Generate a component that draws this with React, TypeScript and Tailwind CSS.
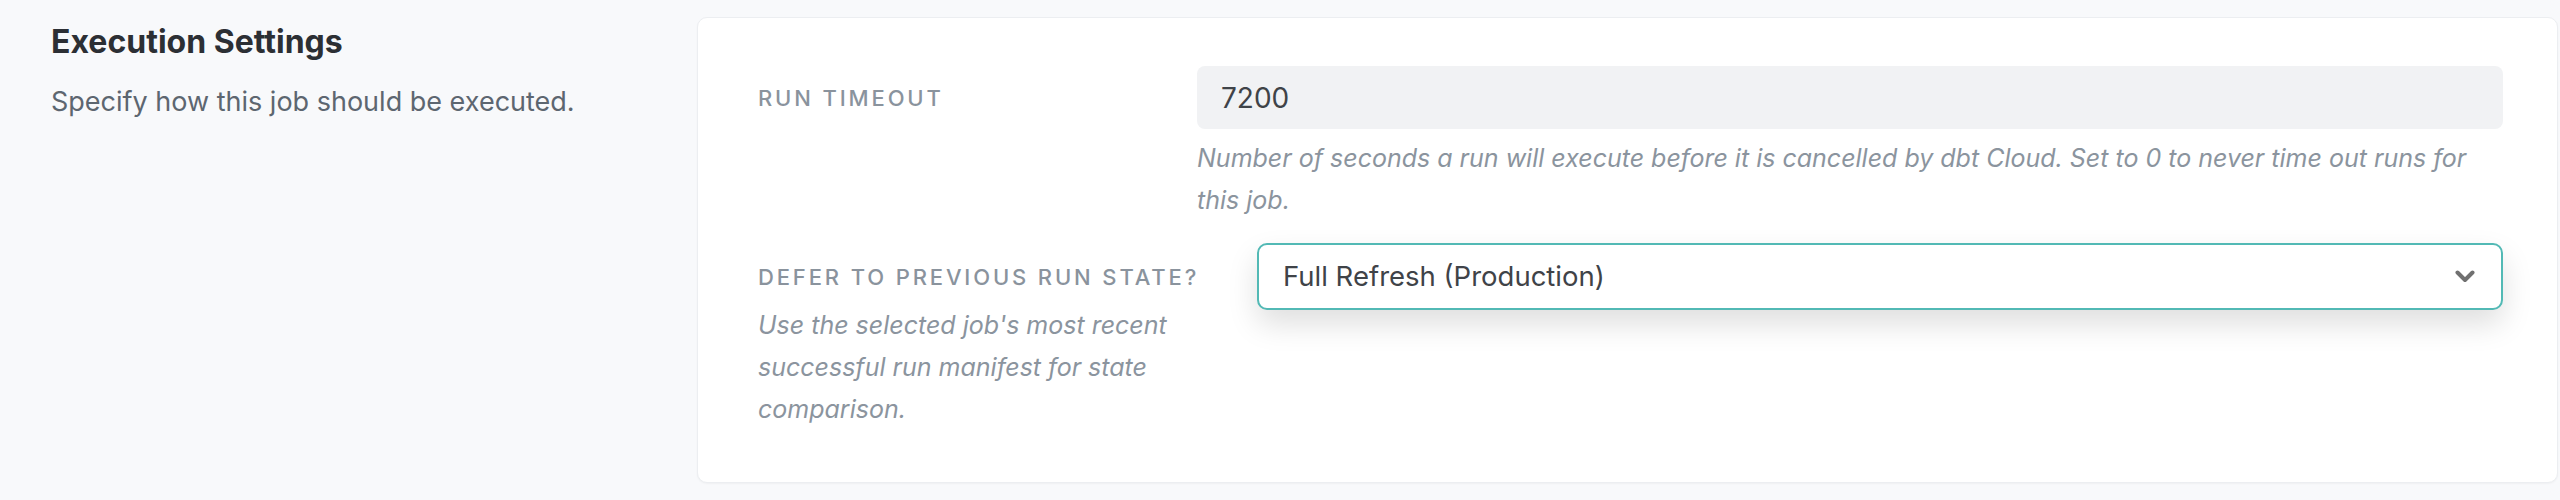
import React from "react";

export default function App() {
  return (
    <div
      className="flex w-full h-[500px] bg-[#f8f9fb]"
      style={{ fontFamily: "Inter, 'Noto Sans', sans-serif" }}
    >
      <div className="w-[697px] flex-none pl-[51px] pt-[24px]">
        <h2 className="text-[32px] leading-[36px] font-bold text-[#2c2f34]">Execution Settings</h2>
        <p className="mt-[22px] text-[27px] leading-[40px] text-[#5d6670]">
          Specify how this job should be executed.
        </p>
      </div>
      <div className="flex-1 mt-[17px] mr-[2px] h-[466px] rounded-[10px] bg-white border border-[#eceef1] shadow-[0_1px_2px_rgba(0,0,0,0.04)] pl-[60px] pr-[54px] pt-[48px]">
        <div className="flex items-start">
          <div className="w-[439px] flex-none pt-[16px]">
            <div className="text-[22px] leading-[33px] tracking-[0.13em] uppercase text-[#8a939d] font-medium whitespace-nowrap">
              Run Timeout
            </div>
          </div>
          <div className="flex-1">
            <div className="h-[63px] rounded-[8px] bg-[#f1f2f4] pl-[24px] flex items-center text-[28px] text-[#3f4348]">
              7200
            </div>
            <p className="mt-[8px] text-[25px] leading-[42px] italic text-[#8b949e]">
              Number of seconds a run will execute before it is cancelled by dbt Cloud. Set to 0 to never time out runs for this job.
            </p>
          </div>
        </div>
        <div className="flex items-start gap-[60px] mt-[22px]">
          <div className="w-[439px] flex-none pt-[18px]">
            <div className="text-[22px] leading-[33px] tracking-[0.13em] uppercase text-[#8a939d] font-medium whitespace-nowrap">
              Defer to previous run state?
            </div>
            <p className="mt-[10px] text-[25px] leading-[42px] italic text-[#8b949e]">
              Use the selected job's most recent successful run manifest for state comparison.
            </p>
          </div>
          <div className="flex-1">
            <div className="h-[67px] rounded-[10px] border-2 border-[#52b9b5] bg-white pl-[24px] pr-[26px] flex items-center justify-between shadow-[0_14px_30px_rgba(0,0,0,0.13)]">
              <span className="text-[27.5px] text-[#3f4348]">Full Refresh (Production)</span>
              <svg width="20" height="13" viewBox="0 0 20 13" fill="none">
                <polyline points="2.5,2.5 10,10 17.5,2.5" stroke="#707070" strokeWidth="4" strokeLinecap="round" strokeLinejoin="round" />
              </svg>
            </div>
          </div>
        </div>
      </div>
    </div>
  );
}
